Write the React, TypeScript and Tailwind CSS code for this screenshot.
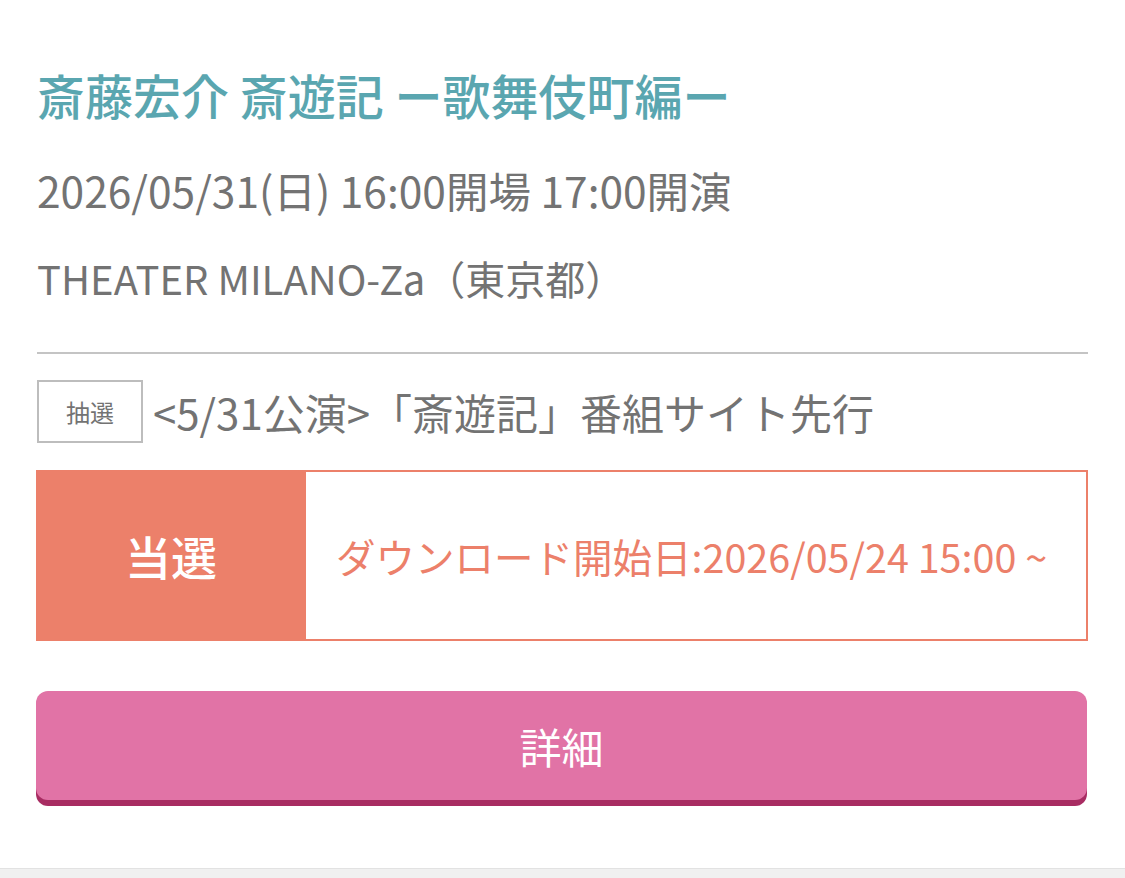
export default function App() {
  return (
    <div
      className="min-h-[878px] bg-white flex flex-col"
      style={{ fontFamily: '"Noto Sans CJK JP", "Noto Sans", sans-serif' }}
    >
      <div className="px-[37px] pt-[60px] flex-1">
        <h1 className="text-[48px] leading-[68px] text-[#5aa6b0] font-medium">
          斎藤宏介 斎遊記 ー歌舞伎町編ー
        </h1>
        <p className="mt-[28px] text-[42.5px] leading-[68px] text-[#737373]">
          2026/05/31(日) 16:00開場 17:00開演
        </p>
        <p className="mt-[20px] text-[40px] leading-[68px] text-[#737373]">
          THEATER MILANO-Za（東京都）
        </p>

        <div className="mt-[40px] h-[2px] bg-[#c4c4c4]" />

        <div className="mt-[26px] flex items-center gap-[10px]">
          <span className="w-[106px] h-[63px] border-2 border-[#bdbdbd] flex items-center justify-center text-[24px] text-[#737373]">
            抽選
          </span>
          <span className="text-[42px] text-[#737373] leading-[63px]">
            &lt;5/31公演&gt;「斎遊記」番組サイト先行
          </span>
        </div>

        <div className="mt-[27px] flex h-[171px] -ml-px">
          <div className="w-[270px] bg-[#ec806a] flex items-center justify-center text-white text-[46px] font-medium">
            当選
          </div>
          <div className="flex-1 border-2 border-l-0 border-[#ec806a] flex items-center pl-[30px] text-[#ec806a] text-[39.5px]">
            ダウンロード開始日:2026/05/24 15:00 ~
          </div>
        </div>

        <button className="mt-[50px] w-full h-[109px] -ml-px rounded-[12px] bg-[#e173a6] shadow-[0_6px_0_#a82c62] text-white text-[42px] flex items-center justify-center">
          詳細
        </button>
      </div>
      <div className="h-[10px] bg-[#f0f0f0] border-t border-[#e2e2e2]" />
    </div>
  )
}
